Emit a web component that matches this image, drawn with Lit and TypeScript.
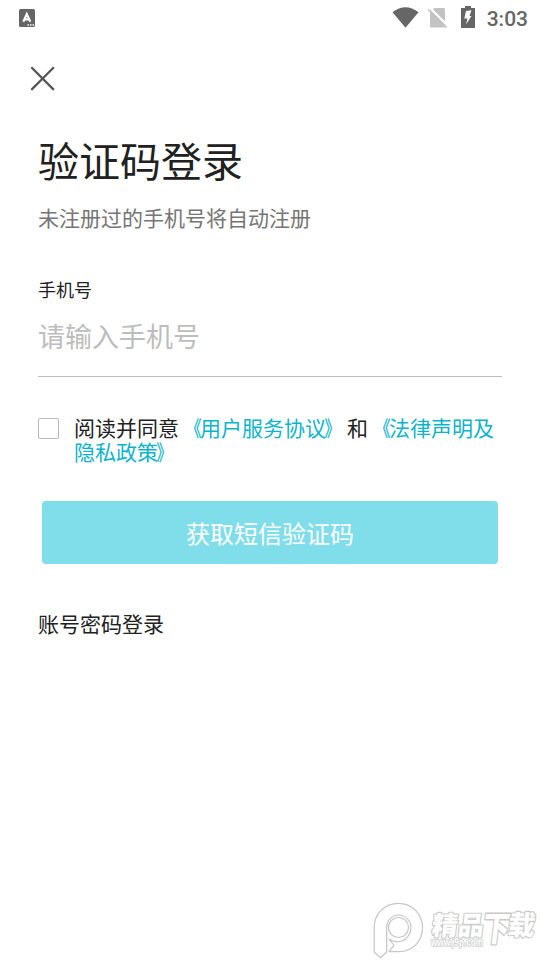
import { LitElement, html, css } from "lit";
import { customElement } from "lit/decorators.js";

@customElement("app-root")
export class AppRoot extends LitElement {
  static styles = css`
    :host { display: block; width: 540px; height: 960px; background: #fff; position: relative; overflow: hidden; font-family: "Noto Sans CJK SC", sans-serif; color: #212121; }
    .status { height: 36px; display: flex; align-items: center; padding: 0 12px 0 19px; box-sizing: border-box; }
    svg { display: block; }
    .right { margin-left: auto; display: flex; align-items: center; }
    .time { font: 500 21px/36px Roboto, sans-serif; color: #666; margin-left: 11px; padding-top: 1px; }
    .close { margin: 30px 0 0 30px; }
    main { padding: 0 38px; }
    h1 { font-size: 41px; font-weight: 400; line-height: 60px; margin: 37px 0 0; }
    .sub { font-size: 21px; line-height: 30px; margin-top: 13px; color: #757575; }
    .label { font-size: 18px; line-height: 26px; margin-top: 44px; }
    .field { font-size: 27px; line-height: 40px; margin-top: 14px; height: 60px; color: #bdbdbd; border-bottom: 1px solid #bdbdbd; }
    .agree { display: flex; margin-top: 38px; font-size: 21px; line-height: 24px; }
    .box { width: 19px; height: 19px; border: 1px solid #b8b8b8; border-radius: 2px; margin: 3px 15px 0 0; flex: none; }
    .link { color: #0db3ca; }
    .mark { display: inline-block; height: 24px; -webkit-text-stroke: 0.3px #0db3ca; }
    .open { transform-origin: right; transform: translateX(1.5px) scaleX(0.75); }
    .shut { transform-origin: left; transform: translateX(-1.5px) scaleX(0.75); }
    .submit { margin: 38px 4px 0; height: 63px; border-radius: 4px; background: #80deea; color: #fff; font-size: 24px; line-height: 63px; text-align: center; }
    .alt { font-size: 21px; line-height: 30px; margin-top: 44px; }
    .brand { position: absolute; left: 373px; top: 902px; display: flex; }
    .words { margin-left: 7px; overflow: visible; }
    .words text { font-family: "Noto Sans CJK SC", sans-serif; font-weight: 900; fill: #fff; stroke: #cacaca; stroke-width: 2.2; paint-order: stroke; stroke-linejoin: round; }
    .words .site { font-family: "Liberation Sans", sans-serif; font-weight: 700; stroke-width: 1.5; }
  `;

  render() {
    return html`
      <div class="status">
        <svg width="17" height="18" viewBox="0 0 17 18"><rect x="0" y="0" width="16" height="18" rx="1.5" fill="#666"/><path d="M4.3 12.8 7.8 5 11.3 12.8M6 10.4H10" fill="none" stroke="#fff" stroke-width="2.1"/><path d="M8.5 16h1.5M11 16h1.5M13.5 16H15" stroke="#fff" stroke-width="1.4"/></svg>
        <div class="right">
          <svg width="84" height="24" viewBox="392 6 84 24">
            <path d="M392.5 12.3Q405.5 2.3 418.5 12.3L405.5 27.7Z" fill="#666"/>
            <path d="M434.5 8H443.5Q445 8 445 9.5V26Q445 27.5 443.5 27.5H431.5Q430 27.5 430 26V12.5Z" fill="#c3c3c3"/>
            <path d="M429.5 7.5 448 26" stroke="#fff" stroke-width="2.2"/>
            <path d="M428.3 9.3 446.5 27.5" stroke="#c3c3c3" stroke-width="1.7"/>
            <path d="M461 8H465V6H471V8H475V28H461Z" fill="#666"/>
            <path d="M466 11 471.5 10.3 469.5 16H471.5L466 24.5 467.5 18.5H464.3Z" fill="#fff"/>
          </svg>
          <span class="time">3:03</span>
        </div>
      </div>
      <svg class="close" width="25" height="26" viewBox="0 0 25 26" fill="none" stroke="#555" stroke-width="2.2"><path d="M1.3 1.3 23.9 23.9M23.9 1.3 1.3 23.9"/></svg>
      <main>
        <h1>验证码登录</h1>
        <div class="sub">未注册过的手机号将自动注册</div>
        <div class="label">手机号</div>
        <div class="field">请输入手机号</div>
        <div class="agree"><span class="box"></span><div>阅读并同意<span class="link"><span class="mark open">《</span>用户服务协议<span class="mark shut">》</span></span>和<span class="link"><span class="mark open">《</span>法律声明及<br>隐私政策<span class="mark shut">》</span></span></div></div>
        <div class="submit">获取短信验证码</div>
        <div class="alt">账号密码登录</div>
      </main>
      <div class="brand">
        <svg width="51" height="57" viewBox="0 0 51 57" fill="none" stroke="#c6c6c6" stroke-width="1.2" stroke-linejoin="round">
          <path d="M1.2 50V25.5C1.2 11.5 12 1.3 25.5 1.3S49.5 12 49.5 25.5 40 49.7 26 49.7H16L21 43.3 16 37.2C19 39 22 39.8 25.5 39.8"/>
          <path d="M1.2 50 7.5 55.7 13.7 50V25.5C13.7 18.5 19 13 25.5 13S38 18.5 38 25.5 32.5 39.5 25.5 39.5"/>
          <circle cx="25.5" cy="25.5" r="10"/>
        </svg>
        <svg class="words" width="109" height="54" viewBox="0 0 109 54">
          <g transform="skewX(-7)">
            <text x="4" y="33" font-size="26" textLength="52" lengthAdjust="spacingAndGlyphs">精品</text>
            <text transform="translate(55 39) scale(1 1.28)" x="0" y="0" font-size="27">下</text>
            <text x="80" y="33" font-size="27">载</text>
          </g>
          <text class="site" x="0" y="44" font-size="10" textLength="52" lengthAdjust="spacingAndGlyphs">www.j9p.com</text>
        </svg>
      </div>
    `;
  }
}
